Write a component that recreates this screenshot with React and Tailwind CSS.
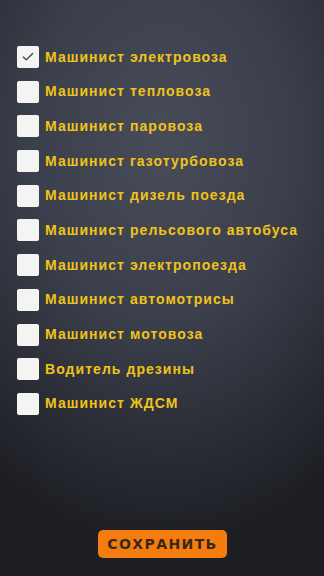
import { Check } from 'lucide-react';

const items = [
  { label: 'Машинист электровоза', checked: true },
  { label: 'Машинист тепловоза' },
  { label: 'Машинист паровоза' },
  { label: 'Машинист газотурбовоза' },
  { label: 'Машинист дизель поезда' },
  { label: 'Машинист рельсового автобуса' },
  { label: 'Машинист электропоезда' },
  { label: 'Машинист автомотрисы' },
  { label: 'Машинист мотовоза' },
  { label: 'Водитель дрезины' },
  { label: 'Машинист ЖДСМ' },
];

export default function App() {
  return (
    <div
      className="h-[576px] w-full flex flex-col bg-[radial-gradient(ellipse_90%_70%_at_50%_25%,#484c59_0%,#3b3f4b_45%,#1c1e23_100%)]"
      style={{ fontFamily: '"Liberation Sans", Arial, sans-serif' }}
    >
      {/* List of professions */}
      <div className="flex flex-col gap-[12.7px] pt-[46px] pl-[17px]">
        {items.map((item) => (
          <label key={item.label} className="flex items-center gap-[6px] h-[22px]">
            <span className="w-[22px] h-[22px] bg-[#f4f4f2] rounded-[2px] flex items-center justify-center shrink-0">
              {item.checked && <Check size={14} strokeWidth={2} className="text-[#333]" />}
            </span>
            <span className="text-[14px] font-bold tracking-[1.05px] text-[#f1c31a] whitespace-nowrap">
              {item.label}
            </span>
          </label>
        ))}
      </div>

      {/* Save button */}
      <div className="mt-auto pb-[18px] flex justify-center">
        <button
          className="w-[129px] h-[28px] rounded-[5px] bg-[#f57c0e] text-[#38281b] text-[14px] font-bold tracking-[1.4px] pl-[1px]"
          style={{ fontFamily: '"DejaVu Sans", sans-serif' }}
        >
          СОХРАНИТЬ
        </button>
      </div>
    </div>
  );
}
